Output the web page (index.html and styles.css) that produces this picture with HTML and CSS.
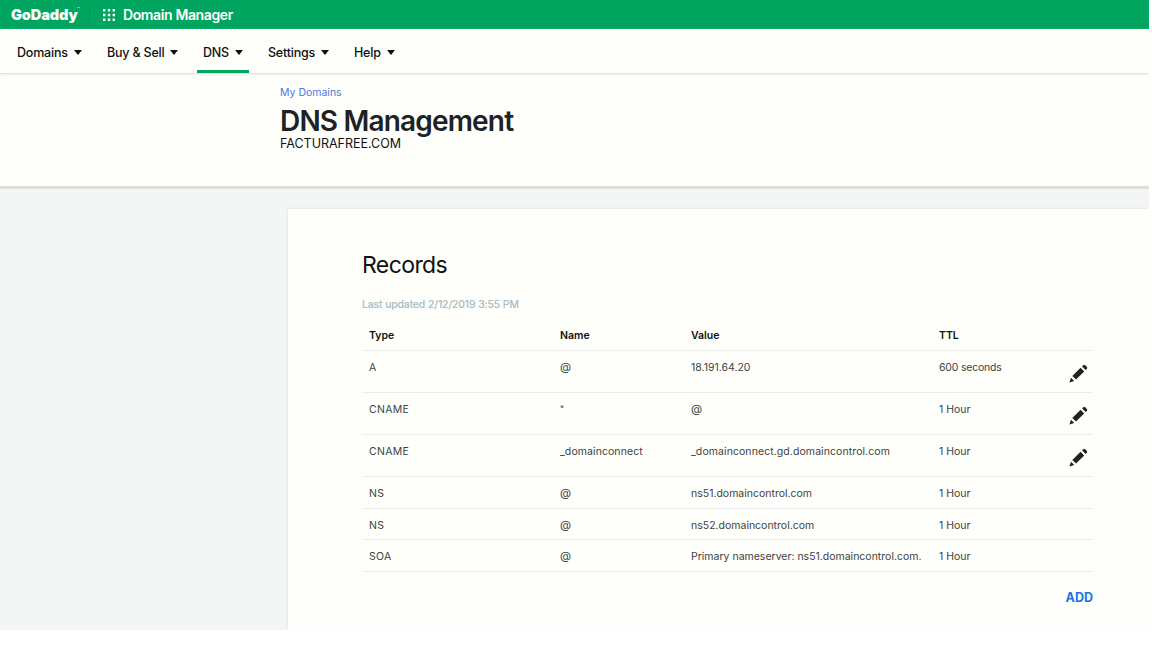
FILE: index.html
```
<!DOCTYPE html>
<html lang="en">
<head>
<meta charset="utf-8">
<title>DNS Management</title>
<link rel="stylesheet" href="styles.css">
</head>
<body>
<svg width="0" height="0" class="defs"><defs>
<symbol id="pencil" viewBox="0 0 20 20"><path d="M.5 19.5l1.6-5 3.4 3.4z"/><path d="M3.5 12.5L12.2 4l3.8 3.8-8.6 8.6z"/><path d="M13.8 2.6L15.2 1.2q.8-.7 1.7.1l1.9 1.9q.8.9.1 1.7l-1.4 1.4z"/></symbol>
</defs></svg>
<div class="app">
  <header class="topbar">
    <span class="logo">GoDaddy</span><span class="tm">™</span>
    <span class="divider"></span>
    <svg class="apps" viewBox="0 0 12 12"><path d="M0 0h2.4v2.4H0zM4.8 0h2.4v2.4H4.8zM9.6 0H12v2.4H9.6zM0 4.8h2.4v2.4H0zM4.8 4.8h2.4v2.4H4.8zM9.6 4.8H12v2.4H9.6zM0 9.6h2.4V12H0zM4.8 9.6h2.4V12H4.8zM9.6 9.6H12V12H9.6z"/></svg>
    <span class="product">Domain Manager</span>
  </header>
  <nav class="nav">
    <a class="item domains"><span>Domains</span><i></i></a>
    <a class="item buy"><span>Buy &amp; Sell</span><i></i></a>
    <a class="item dns active"><span>DNS</span><i></i></a>
    <a class="item settings"><span>Settings</span><i></i></a>
    <a class="item help"><span>Help</span><i></i></a>
  </nav>
  <section class="heading">
    <a class="crumb">My Domains</a>
    <h1>DNS Management</h1>
    <div class="domain">FACTURAFREE.COM</div>
  </section>
  <main class="content">
    <section class="card">
      <h2>Records</h2>
      <p class="updated">Last updated 2/12/2019 3:55 PM</p>
      <div class="table">
        <div class="row head"><span>Type</span><span>Name</span><span>Value</span><span>TTL</span></div>
        <div class="row tall"><span class="type">A</span><span class="at">@</span><span>18.191.64.20</span><span class="sec">600 seconds</span><svg class="edit"><use href="#pencil"/></svg></div>
        <div class="row tall"><span class="type">CNAME</span><span class="star">*</span><span class="at">@</span><span>1 Hour</span><svg class="edit"><use href="#pencil"/></svg></div>
        <div class="row tall"><span class="type">CNAME</span><span class="host">_domainconnect</span><span class="host">_domainconnect.gd.domaincontrol.com</span><span>1 Hour</span><svg class="edit"><use href="#pencil"/></svg></div>
        <div class="row"><span class="type">NS</span><span class="at">@</span><span>ns51.domaincontrol.com</span><span>1 Hour</span></div>
        <div class="row"><span class="type">NS</span><span class="at">@</span><span>ns52.domaincontrol.com</span><span>1 Hour</span></div>
        <div class="row"><span class="type">SOA</span><span class="at">@</span><span>Primary nameserver: ns51.domaincontrol.com.</span><span>1 Hour</span></div>
      </div>
      <a class="add">ADD</a>
    </section>
  </main>
</div>
</body>
</html>
```
FILE: styles.css
```
* { box-sizing: border-box; }
body { margin: 0; background: #fff; font-family: Inter, "Liberation Sans", sans-serif; color: #111; overflow: hidden; }
.defs { display: none; }
.app { width: 1149px; height: 630px; overflow: hidden; display: flex; flex-direction: column; background: #fefffb; }
.topbar { height: 29px; flex: none; background: #00a65f; color: #fff; display: flex; align-items: center; padding-left: 11px; }
.logo { font-size: 14.5px; font-weight: 900; letter-spacing: -0.1px; width: 66px; line-height: 28px; white-space: nowrap; }
.tm { font-size: 4px; width: 3px; align-self: flex-start; padding-top: 6px; }
.divider { width: 1px; height: 15px; background: #079050; margin-left: 9px; }
.apps { width: 12px; height: 12px; margin-left: 13px; fill: #fff; }
.product { font-size: 14px; font-weight: 600; letter-spacing: -0.38px; margin-left: 8px; line-height: 29px; }
.nav { height: 45px; flex: none; display: flex; padding-left: 11px; border-bottom: 1px solid #e3e4e2; box-shadow: 0 1px 2px #eceeec; }
.item { height: 44px; display: flex; align-items: center; justify-content: space-between; padding: 5px 6px 0; margin-right: 13px; font-size: 12.5px; font-weight: 500; letter-spacing: -0.2px; white-space: nowrap; border-bottom: 3px solid transparent; }
.item i { border: 4px solid transparent; border-top: 5px solid #111; border-bottom: 0; margin-top: 1px; }
.domains { width: 77px; }
.buy { width: 83px; }
.dns { width: 52px; }
.settings { width: 73px; }
.help { width: 53px; }
.active { border-bottom-color: #00a65f; }
.heading { height: 115px; flex: none; padding: 11px 0 0 280px; border-bottom: 3px solid #dcdddc; }
.crumb { display: block; font-size: 10.5px; line-height: 16px; color: #4b78dc; }
h1 { margin: 3px 0 0; font-size: 28px; font-weight: 600; letter-spacing: -0.82px; line-height: 35px; color: #202124; white-space: nowrap; }
.domain { font-size: 12.5px; line-height: 14px; margin-top: -2px; }
.content { flex: 1; background: #f4f6f6; padding: 20px 0 0 288px; }
.card { height: 430px; background: #fefffb; box-shadow: 0 0 3px #d8dcdb; padding: 41px 56px 0 74px; }
h2 { margin: 0; font-size: 23px; font-weight: 400; letter-spacing: -0.6px; line-height: 30px; }
.updated { margin: 17px 0 0; font-size: 10.5px; letter-spacing: -0.12px; line-height: 16px; color: #a5bac3; -webkit-text-stroke: 0.2px #a5bac3; }
.table { margin-top: 7px; }
.row { height: 31.5px; display: grid; grid-template-columns: 191px 131px 248px 131px 24px; padding-left: 7px; border-bottom: 1px solid #eceeee; font-size: 10.5px; line-height: 33px; color: #414141; white-space: nowrap; }
.head { height: 31px; line-height: 31px; font-weight: 600; color: #111; }
.tall { height: 42px; }
.type { letter-spacing: 0.3px; }
.host { letter-spacing: 0.08px; }
.at { font-size: 11.5px; }
.star { font-size: 8px; line-height: 31px; }
.sec { letter-spacing: -0.2px; }
.edit { width: 19px; height: 19px; margin-top: 13px; margin-left: -1px; fill: #222; }
.add { display: block; text-align: right; font-size: 12.5px; line-height: 20px; font-weight: 700; color: #1b73e3; margin-top: 16px; }
```
